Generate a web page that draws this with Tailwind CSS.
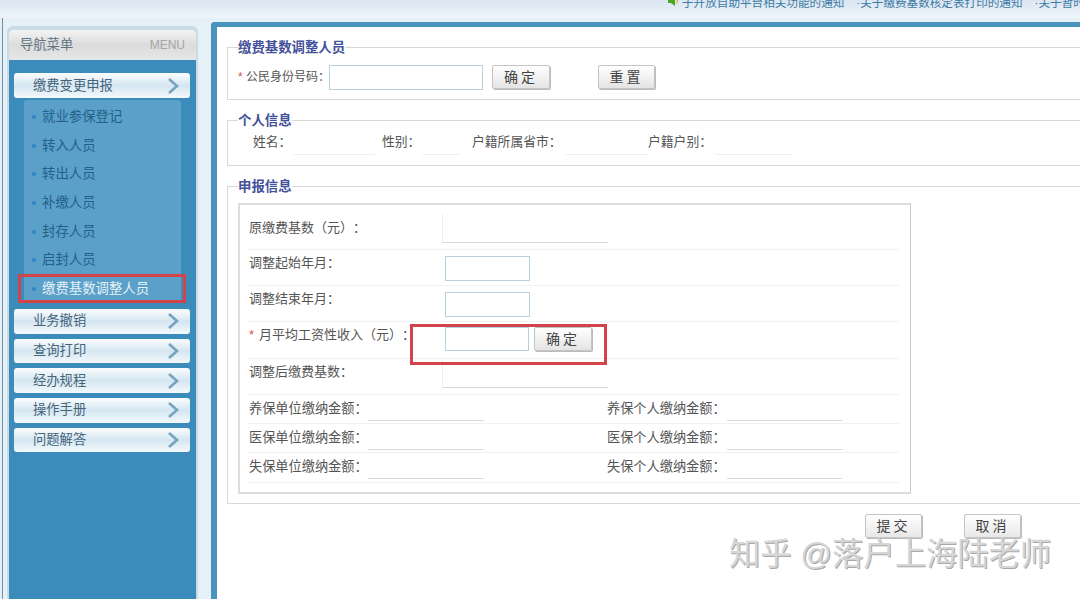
<!DOCTYPE html>
<html lang="zh-CN">
<head>
<meta charset="UTF-8">
<title>缴费基数调整人员</title>
<script src="https://cdn.jsdelivr.net/npm/@tailwindcss/browser@4"></script>
</head>
<body class="relative h-[599px] w-[1080px] overflow-hidden whitespace-nowrap bg-[#e6f0f7] font-['Liberation_Sans','Noto_Sans_CJK_SC',sans-serif] text-[#444] [text-spacing-trim:space-all]">

<!-- 顶部通知 -->
<div class="flex h-[18px] gap-[12px] overflow-hidden bg-gradient-to-b from-[#dbe6f2] to-[#eef4fa] pl-[668px] text-[11.6px] leading-[14px] text-[#3c7ba3]">
    <div class="-mt-[4px] flex items-start gap-[3px]">
        <svg class="mt-[1px] shrink-0" width="11" height="11" viewBox="0 0 11 11"><path d="M0 3h3l4-3v9L3 6H0z" fill="#4aa81c"/><path d="M8.500 1.500q2 2.500 0 5" fill="none" stroke="#e0a020" stroke-width="1"/></svg>
        <span>于开放自助平台相关功能的通知</span>
    </div>
    <div class="-mt-[4px]">·关于缴费基数核定表打印的通知</div>
    <div class="-mt-[4px]">·关于暂时停止相关业务的通知</div>
</div>

<div class="flex h-[581px]">
    <!-- 左侧菜单 -->
    <div class="ml-[2px] h-full w-[209px] shrink-0 border-l border-l-[#6d8fa8] pl-[4px] pt-[8px]">
        <div class="h-full w-[191px] rounded-t-[6px] border-x-2 border-t-4 border-[#c8dbe7] bg-[#3b8cbb]">
            <div class="flex h-[30px] items-center justify-between rounded-t-[3px] bg-gradient-to-b from-[#f4f4f4] via-[#dcdcdc] to-[#e6e6e6] pl-[11px] pr-[11px] text-[12px] text-[#5f7584]">
                <span class="text-[13.300px]">导航菜单</span><span class="text-[#a5a5a5]">MENU</span>
            </div>
            <div class="px-[5px] pt-[13px]">
                <a class="mr-[1px] flex h-[25px] items-center justify-between rounded-[3px] bg-gradient-to-b from-[#fbfdfe] via-[#d5e6f1] to-[#f4f9fc] pl-[19px] pr-[11px] text-[13.300px] text-[#44657b]">
                    缴费变更申报
                    <svg width="12" height="18" viewBox="0 0 12 18"><path d="M2 2l8 7-8 7" fill="none" stroke="#76a3bd" stroke-width="2.600"/></svg>
                </a>
                <div class="mx-[10px] mt-[2px] rounded-t-[3px] bg-[#5aa0c8] pt-[3px] text-[13.400px] text-[#256088]">
                    <div class="flex h-[28.600px] items-center gap-[6px] pl-[8px]"><i class="size-[4px] rounded-full bg-[#2f86c6]"></i>就业参保登记</div>
                    <div class="flex h-[28.600px] items-center gap-[6px] pl-[8px]"><i class="size-[4px] rounded-full bg-[#2f86c6]"></i>转入人员</div>
                    <div class="flex h-[28.600px] items-center gap-[6px] pl-[8px]"><i class="size-[4px] rounded-full bg-[#2f86c6]"></i>转出人员</div>
                    <div class="flex h-[28.600px] items-center gap-[6px] pl-[8px]"><i class="size-[4px] rounded-full bg-[#2f86c6]"></i>补缴人员</div>
                    <div class="flex h-[28.600px] items-center gap-[6px] pl-[8px]"><i class="size-[4px] rounded-full bg-[#2f86c6]"></i>封存人员</div>
                    <div class="flex h-[28.600px] items-center gap-[6px] pl-[8px]"><i class="size-[4px] rounded-full bg-[#2f86c6]"></i>启封人员</div>
                    <div class="relative flex h-[28.600px] items-center gap-[6px] pl-[8px] text-[#e4f1f8]">
                        <i class="size-[4px] rounded-full bg-[#2f86c6]"></i>缴费基数调整人员
                        <div class="absolute -left-[6px] -right-[5px] -top-[1px] bottom-0 border-[3px] border-[#d2444a]"></div>
                    </div>
                </div>
                <div class="mr-[1px] mt-[6px] flex flex-col gap-[5px] text-[13.300px] text-[#44657b]">
                    <a class="flex h-[24.600px] items-center justify-between rounded-[3px] bg-gradient-to-b from-[#fbfdfe] via-[#d5e6f1] to-[#f4f9fc] pl-[19px] pr-[11px]">业务撤销<svg width="12" height="18" viewBox="0 0 12 18"><path d="M2 2l8 7-8 7" fill="none" stroke="#76a3bd" stroke-width="2.600"/></svg></a>
                    <a class="flex h-[24.600px] items-center justify-between rounded-[3px] bg-gradient-to-b from-[#fbfdfe] via-[#d5e6f1] to-[#f4f9fc] pl-[19px] pr-[11px]">查询打印<svg width="12" height="18" viewBox="0 0 12 18"><path d="M2 2l8 7-8 7" fill="none" stroke="#76a3bd" stroke-width="2.600"/></svg></a>
                    <a class="flex h-[24.600px] items-center justify-between rounded-[3px] bg-gradient-to-b from-[#fbfdfe] via-[#d5e6f1] to-[#f4f9fc] pl-[19px] pr-[11px]">经办规程<svg width="12" height="18" viewBox="0 0 12 18"><path d="M2 2l8 7-8 7" fill="none" stroke="#76a3bd" stroke-width="2.600"/></svg></a>
                    <a class="flex h-[24.600px] items-center justify-between rounded-[3px] bg-gradient-to-b from-[#fbfdfe] via-[#d5e6f1] to-[#f4f9fc] pl-[19px] pr-[11px]">操作手册<svg width="12" height="18" viewBox="0 0 12 18"><path d="M2 2l8 7-8 7" fill="none" stroke="#76a3bd" stroke-width="2.600"/></svg></a>
                    <a class="flex h-[24.600px] items-center justify-between rounded-[3px] bg-gradient-to-b from-[#fbfdfe] via-[#d5e6f1] to-[#f4f9fc] pl-[19px] pr-[11px]">问题解答<svg width="12" height="18" viewBox="0 0 12 18"><path d="M2 2l8 7-8 7" fill="none" stroke="#76a3bd" stroke-width="2.600"/></svg></a>
                </div>
            </div>
        </div>
    </div>

    <!-- 主内容 -->
    <div class="mt-[4px] flex-1 overflow-hidden rounded-tl-[4px] border-l-[6px] border-t-[5px] border-[#4a93bd] bg-white pl-[10px] text-[13px]">
        <div class="w-[900px]">
            <fieldset class="mt-[11px] h-[62px] border border-[#d8d8d8] pl-[10px]">
                <legend class="h-[18px] text-[13.400px] font-bold leading-[20px] text-[#43509a]">缴费基数调整人员</legend>
                <div class="mt-[9px] flex h-[24px] items-center text-[12px] text-[#555]">
                    <span class="w-[8px] text-[#d9534f]">*</span>
                    <span class="w-[83px]">公民身份号码：</span>
                    <input class="h-[25px] w-[154px] border border-[#b9d0dd] bg-white">
                    <button class="ml-[9px] h-[24px] w-[58px] rounded-[2px] border border-[#c4c4c4] bg-gradient-to-b from-white to-[#e4e4e4] text-[14px] tracking-[3px] text-[#444] shadow-[1px_1px_0_#bbb]">确定</button>
                    <button class="ml-[48px] h-[24px] w-[57px] rounded-[2px] border border-[#c4c4c4] bg-gradient-to-b from-white to-[#e4e4e4] text-[14px] tracking-[3px] text-[#444] shadow-[1px_1px_0_#bbb]">重置</button>
                </div>
            </fieldset>

            <fieldset class="mt-[11px] h-[55px] border border-[#d8d8d8] pl-[10px]">
                <legend class="h-[18px] text-[13.400px] font-bold leading-[20px] text-[#43509a]">个人信息</legend>
                <div class="flex h-[26px] text-[12.800px] leading-[26px] text-[#555]">
                    <span class="ml-[15px] w-[40px]">姓名：</span><span class="w-[82px] border-b border-[#f0f0f0]"></span>
                    <span class="ml-[7px] w-[40px]">性别：</span><span class="w-[38px] border-b border-[#f0f0f0]"></span>
                    <span class="ml-[12px] w-[93px]">户籍所属省市：</span><span class="w-[83px] border-b border-[#f0f0f0]"></span>
                    <span class="w-[67px]">户籍户别：</span><span class="w-[77px] border-b border-[#f0f0f0]"></span>
                </div>
            </fieldset>

            <fieldset class="mt-[11px] h-[327px] border border-[#d8d8d8] pl-[10px]">
                <legend class="h-[18px] text-[13.400px] font-bold leading-[20px] text-[#43509a]">申报信息</legend>
                <div class="mt-[8px] h-[291px] w-[673px] border-2 border-[#dcdcdc] border-r border-r-[#c9c9c9] pl-[8px] pr-[10px] pt-[9px] text-[13px] text-[#555]">
                    <div class="grid h-[36px] grid-cols-[194px_166px] border-b border-[#f2f2f2]">
                        <div class="pl-[1px] pt-[4px] leading-[20px]">原缴费基数（元）：</div>
                        <div class="mb-[6px] border-b border-l border-b-[#d8d8d8] border-l-[#eee]"></div>
                    </div>
                    <div class="grid h-[36px] grid-cols-[197px_85px] items-start border-b border-[#f2f2f2]">
                        <div class="mt-[3px] pl-[1px] leading-[20px]">调整起始年月：</div>
                        <input class="mt-[6px] h-[25px] w-[85px] border border-[#b9d0dd]">
                    </div>
                    <div class="grid h-[36px] grid-cols-[197px_85px] items-start border-b border-[#f2f2f2]">
                        <div class="mt-[3px] pl-[1px] leading-[20px]">调整结束年月：</div>
                        <input class="mt-[6px] h-[25px] w-[85px] border border-[#b9d0dd]">
                    </div>
                    <div class="relative flex h-[37px] items-start border-b border-[#f2f2f2]">
                        <div class="mt-[3px] w-[197px] pl-[1px] leading-[20px]"><span class="mr-[5px] text-[#d9534f]">*</span>月平均工资性收入（元）：</div>
                        <input class="mt-[5px] h-[24px] w-[84px] border border-[#b9d0dd]">
                        <button class="ml-[5px] mt-[5px] h-[24px] w-[58px] rounded-[2px] border border-[#c4c4c4] bg-gradient-to-b from-white to-[#e4e4e4] text-[14px] tracking-[3px] text-[#444] shadow-[1px_1px_0_#bbb]">确定</button>
                        <div class="absolute left-[162px] top-[2px] h-[41px] w-[197px] border-[3px] border-[#d2444a]"></div>
                    </div>
                    <div class="grid h-[36px] grid-cols-[194px_166px] border-b border-[#f2f2f2]">
                        <div class="pl-[1px] pt-[3px] leading-[20px]">调整后缴费基数：</div>
                        <div class="mb-[6px] border-b border-l border-b-[#d8d8d8] border-l-[#eee]"></div>
                    </div>
                    <div class="flex h-[29px] items-center border-b border-[#f2f2f2] text-[13.200px]">
                        <span class="w-[120px] pl-[1px]">养保单位缴纳金额：</span><span class="h-[26px] w-[116px] self-start border-b border-[#d8d8d8]"></span>
                        <span class="ml-[123px] w-[120px]">养保个人缴纳金额：</span><span class="h-[26px] w-[115px] self-start border-b border-[#d8d8d8]"></span>
                    </div>
                    <div class="flex h-[29px] items-center border-b border-[#f2f2f2] text-[13.200px]">
                        <span class="w-[120px] pl-[1px]">医保单位缴纳金额：</span><span class="h-[26px] w-[116px] self-start border-b border-[#d8d8d8]"></span>
                        <span class="ml-[123px] w-[120px]">医保个人缴纳金额：</span><span class="h-[26px] w-[115px] self-start border-b border-[#d8d8d8]"></span>
                    </div>
                    <div class="flex h-[30px] items-center border-b border-[#f2f2f2] pb-[1px] text-[13.200px]">
                        <span class="w-[120px] pl-[1px]">失保单位缴纳金额：</span><span class="h-[26px] w-[116px] self-start border-b border-[#d8d8d8]"></span>
                        <span class="ml-[123px] w-[120px]">失保个人缴纳金额：</span><span class="h-[26px] w-[115px] self-start border-b border-[#d8d8d8]"></span>
                    </div>
                </div>
            </fieldset>

            <div class="mt-[10px] flex gap-[42px] pl-[638px]">
                <button class="h-[24px] w-[57px] rounded-[2px] border border-[#c4c4c4] bg-gradient-to-b from-white to-[#e8e8e8] text-[14px] tracking-[3px] text-[#444] shadow-[1px_1px_0_#bbb]">提交</button>
                <button class="h-[24px] w-[57px] rounded-[2px] border border-[#c4c4c4] bg-gradient-to-b from-white to-[#e8e8e8] text-[14px] tracking-[3px] text-[#444] shadow-[1px_1px_0_#bbb]">取消</button>
            </div>
        </div>
    </div>
</div>

<!-- 水印 -->
<div class="absolute left-[729px] top-[535px] text-[31.300px] leading-[40px] text-[#d6d6d6] [text-shadow:1px_1px_0_#a8a8a8]">知乎 @落户上海陆老师</div>
</body>
</html>
